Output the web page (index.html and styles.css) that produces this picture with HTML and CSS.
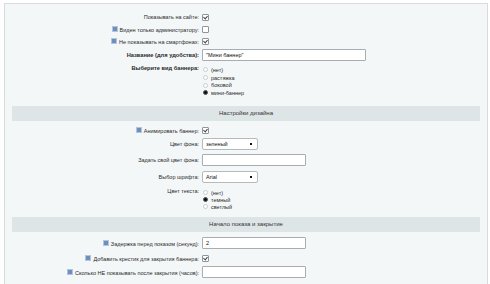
FILE: index.html
```html
<!DOCTYPE html>
<html lang="ru">
<head>
  <meta charset="UTF-8">
  <title>Настройки баннера</title>
  <link rel="stylesheet" href="styles.css">
</head>
<body>
  <div class="panel">
    <!-- Основные -->
    <div class="row r1">
      <div class="label">Показывать на сайте:</div>
      <div class="field"><span class="check on"></span></div>
    </div>
    <div class="row r2">
      <div class="label"><span class="hint"></span>Виден только администратору:</div>
      <div class="field"><span class="check"></span></div>
    </div>
    <div class="row r3">
      <div class="label"><span class="hint"></span>Не показывать на смартфонах:</div>
      <div class="field"><span class="check on"></span></div>
    </div>
    <div class="row r4">
      <div class="label bold">Название (для удобства):</div>
      <div class="field"><span class="input wide">"Мини баннер"</span></div>
    </div>
    <div class="row top r5">
      <div class="label bold">Выберите вид баннера:</div>
      <div class="field radios">
        <div class="radio-item"><span class="radio"></span>(нет)</div>
        <div class="radio-item"><span class="radio"></span>растяжка</div>
        <div class="radio-item"><span class="radio"></span>боковой</div>
        <div class="radio-item"><span class="radio on"></span>мини-баннер</div>
      </div>
    </div>

    <div class="heading h1">Настройки дизайна</div>

    <div class="row r6">
      <div class="label"><span class="hint"></span>Анимировать баннер:</div>
      <div class="field"><span class="check on"></span></div>
    </div>
    <div class="row r7">
      <div class="label">Цвет фона:</div>
      <div class="field"><span class="select">зеленый<i class="arrow"></i></span></div>
    </div>
    <div class="row r8">
      <div class="label">Задать свой цвет фона:</div>
      <div class="field"><span class="input"></span></div>
    </div>
    <div class="row r9">
      <div class="label">Выбор шрифта:</div>
      <div class="field"><span class="select">Arial<i class="arrow"></i></span></div>
    </div>
    <div class="row top r10">
      <div class="label">Цвет текста:</div>
      <div class="field radios small">
        <div class="radio-item"><span class="radio"></span>(нет)</div>
        <div class="radio-item"><span class="radio on"></span>темный</div>
        <div class="radio-item"><span class="radio"></span>светлый</div>
      </div>
    </div>

    <div class="heading h2">Начало показа и закрытие</div>

    <div class="row r11">
      <div class="label"><span class="hint"></span>Задержка перед показом (секунд):</div>
      <div class="field"><span class="input">2</span></div>
    </div>
    <div class="row r12">
      <div class="label"><span class="hint"></span>Добавить крестик для закрытия баннера:</div>
      <div class="field"><span class="check on"></span></div>
    </div>
    <div class="row r13">
      <div class="label"><span class="hint"></span>Сколько НЕ показывать после закрытия (часов):</div>
      <div class="field"><span class="input"></span></div>
    </div>
  </div>
</body>
</html>
```

FILE: styles.css
```css
/* Форма настроек баннера */
body {
  margin: 0;
  background: #fff;
  font-family: "Liberation Sans", Arial, sans-serif;
  font-size: 5.5px;
  color: #2a2a2a;
}
.panel {
  margin: 3px 2px 0 4px;
  height: 290px;
  padding: 7px 7px 0 7px;
  background: #f4f7f8;
  border: 1px solid #d6dbdd;
  border-bottom: none;
  box-sizing: border-box;
}
.row {
  display: flex;
  align-items: center;
  height: 12px;
}
.row.top {
  align-items: flex-start;
}
.label {
  width: 187px;
  text-align: right;
  padding-right: 3px;
  white-space: nowrap;
}
.label.bold {
  font-weight: bold;
  font-size: 5.7px;
}
.field {
  display: flex;
  align-items: center;
}
.r4 { height: 14px; margin-top: 1px; }
.r5 { height: 36px; margin-top: 2px; }
.r5 .label { padding-top: 1px; }
.r6 { margin-top: 3px; }
.r7 { height: 14px; margin-top: 1px; }
.r8 { height: 14px; margin-top: 2px; }
.r9 { height: 14px; margin-top: 3px; }
.r10 { height: 24px; margin-top: 3px; }
.r10 .label { padding-top: 1px; }
.r11 { height: 14px; margin-top: 4px; }
.r12 { margin-top: 2px; }
.r13 { height: 14px; margin-top: 1px; }

.heading {
  height: 15px;
  line-height: 15px;
  background: #dee5e7;
  color: #333;
  font-size: 6px;
  text-align: center;
}
.h1 { margin-top: 6px; }
.h2 { margin-top: 6px; }

.hint {
  display: inline-block;
  width: 4px;
  height: 4px;
  margin-right: 2px;
  vertical-align: -0.5px;
  background: #6d8fbf;
  border: 1px solid #b4c4dc;
}
.check {
  display: inline-block;
  width: 5px;
  height: 5px;
  border: 1px solid #8e959b;
  border-radius: 1px;
  background: #fff;
  position: relative;
}
.check.on::after {
  content: "";
  position: absolute;
  left: 1px;
  top: 0;
  width: 2px;
  height: 3px;
  border: solid #444;
  border-width: 0 1px 1px 0;
  transform: rotate(40deg);
}
.input {
  display: inline-block;
  box-sizing: border-box;
  width: 104px;
  height: 12px;
  line-height: 10px;
  padding: 0 3px;
  background: #fff;
  border: 1px solid #a7adb1;
  border-radius: 1px;
  color: #111;
}
.input.wide {
  width: 164px;
}
.select {
  display: inline-block;
  box-sizing: border-box;
  position: relative;
  width: 56px;
  height: 12px;
  line-height: 10px;
  padding: 0 3px;
  background: #fff;
  border: 1px solid #b5babd;
  border-radius: 2px;
  color: #111;
}
.arrow {
  position: absolute;
  right: 5px;
  top: 4px;
  width: 2px;
  height: 2px;
  background: #111;
}
.radios {
  flex-direction: column;
  align-items: flex-start;
  padding-top: 2px;
}
.radio-item {
  display: flex;
  align-items: center;
  height: 7.7px;
}
.radios.small .radio-item {
  height: 7.2px;
}
.radio {
  display: inline-block;
  box-sizing: border-box;
  width: 5px;
  height: 5px;
  margin: 0 3px 0 1px;
  border: 1px solid #c9cdd0;
  border-radius: 50%;
  background: #fff;
  position: relative;
}
.radio.on {
  border-color: #555;
  background: #111;
}
```
